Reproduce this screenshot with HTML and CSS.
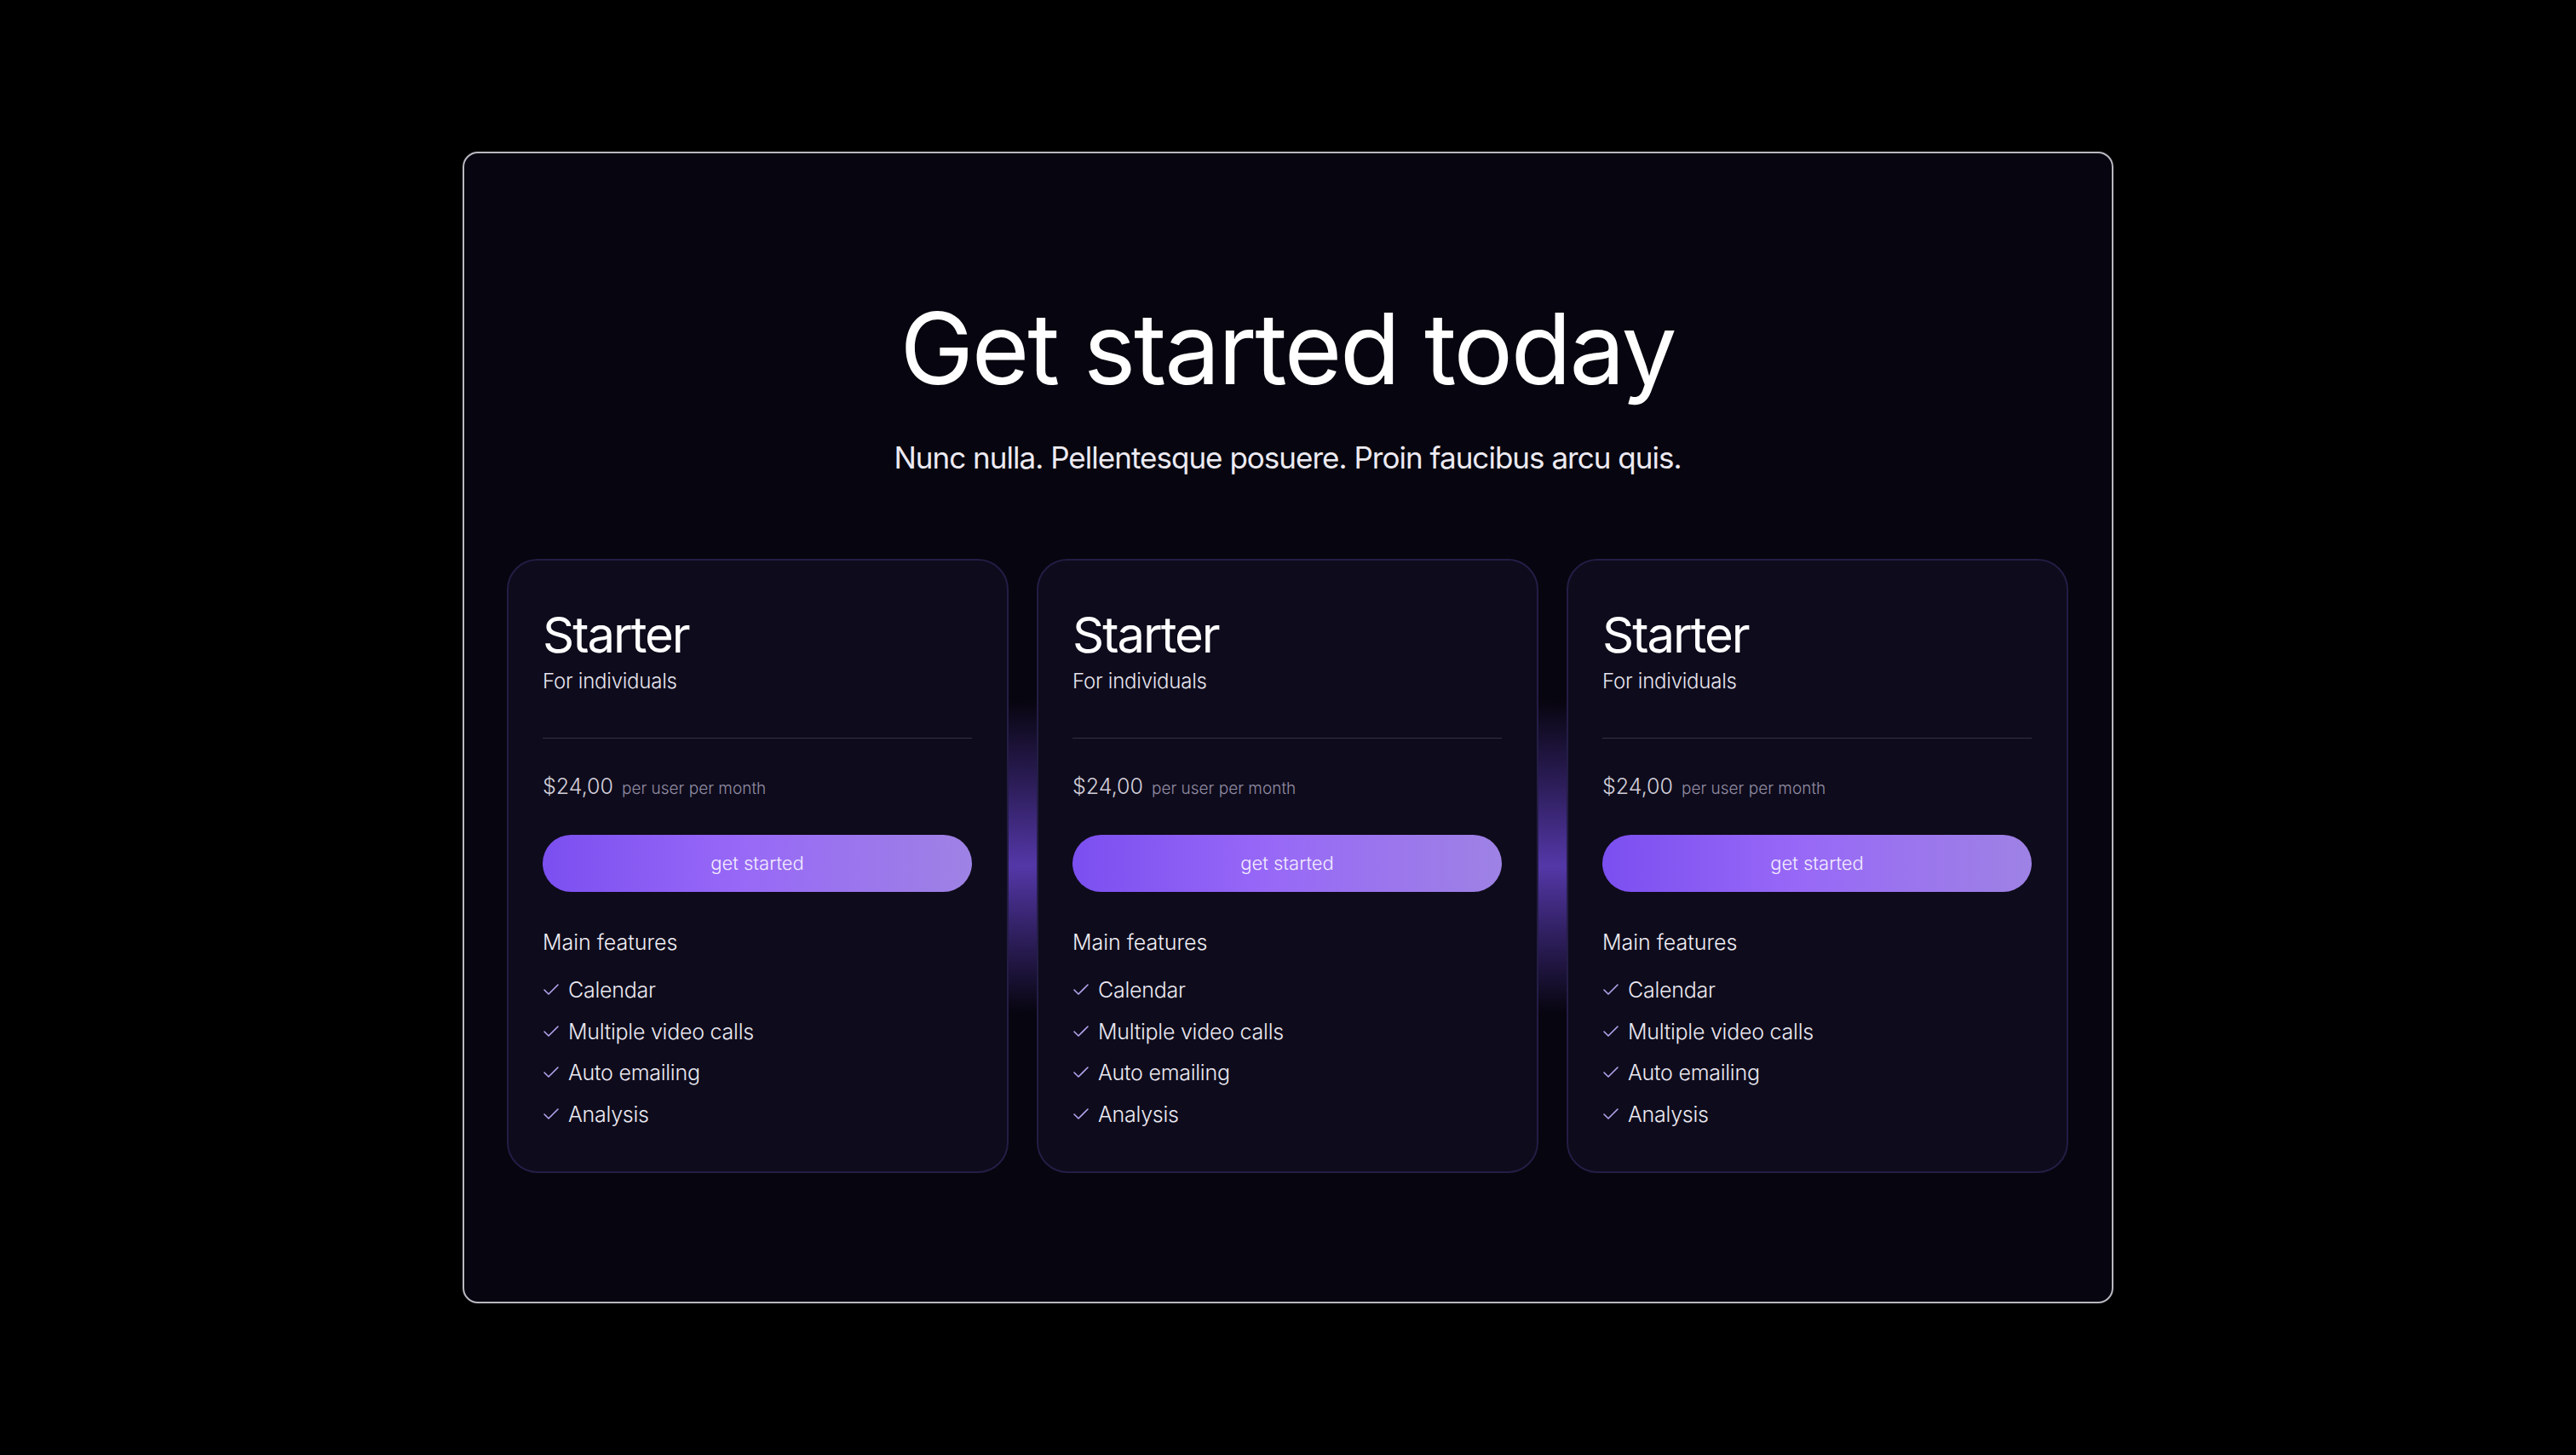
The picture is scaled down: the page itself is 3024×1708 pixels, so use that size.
FILE: index.html
```html
<!DOCTYPE html>
<html lang="en">
<head>
  <meta charset="UTF-8" />
  <meta name="viewport" content="width=device-width, initial-scale=1.0"/>
  <title>Pricing</title>
  <link rel="stylesheet" href="styles.css">
</head>
<body>

  <main class="pricing">
    <header class="intro">
      <h1>Get started today</h1>
      <p>Nunc nulla. Pellentesque posuere. Proin faucibus arcu quis.</p>
    </header>

    <div class="plans" id="plans"></div>
  </main>

  <script>
    const plans = [
      { name: "Starter", audience: "For individuals", price: "$24,00", period: "per user per month" },
      { name: "Starter", audience: "For individuals", price: "$24,00", period: "per user per month" },
      { name: "Starter", audience: "For individuals", price: "$24,00", period: "per user per month" }
    ];

    const features = ["Calendar", "Multiple video calls", "Auto emailing", "Analysis"];

    const checkIcon = `<svg class="check" width="24" height="24" viewBox="0 0 24 24" fill="none"
      stroke="currentColor" stroke-width="1.6" stroke-linecap="round" stroke-linejoin="round">
      <path d="M20 6 9 17l-5-5"/></svg>`;

    const list = document.getElementById("plans");

    plans.forEach(plan => {
      const card = document.createElement("article");
      card.className = "plan";
      card.innerHTML = `
        <h2>${plan.name}</h2>
        <div class="audience">${plan.audience}</div>
        <hr class="divider" />
        <div class="price"><span class="amount">${plan.price}</span><span class="period">${plan.period}</span></div>
        <button class="cta">get started</button>
        <h3>Main features</h3>
        <ul class="features">
          ${features.map(f => `<li>${checkIcon}<span>${f}</span></li>`).join("")}
        </ul>
      `;
      list.appendChild(card);
    });
  </script>

</body>
</html>
```

FILE: styles.css
```css
html, body {
  margin: 0;
  padding: 0;
}

body {
  font-family: Inter, "Noto Sans", sans-serif;
  background-color: #000;
  color: #fff;
  min-height: 100vh;
  display: flex;
  align-items: center;
  justify-content: center;
}

.pricing {
  width: 1938px;
  box-sizing: border-box;
  border: 2px solid #b9b8c0;
  border-radius: 18px;
  background-color: #07050f;
  padding: 171px 51px 151px 50px;
}

.intro {
  text-align: center;
}

.intro h1 {
  margin: 0;
  font-size: 116px;
  line-height: 116px;
  font-weight: 400;
  letter-spacing: -0.02em;
  color: #fff;
}

.intro p {
  margin: 49px 0 0 0;
  font-size: 35px;
  line-height: 42px;
  font-weight: 400;
  letter-spacing: -0.028em;
  color: #eceaf2;
}

.plans {
  margin-top: 98px;
  display: grid;
  grid-template-columns: repeat(3, 1fr);
  gap: 33px;
  background: linear-gradient(to bottom,
    transparent 23%,
    rgba(70, 46, 140, 0.6) 37%,
    rgba(88, 58, 176, 0.95) 50%,
    rgba(70, 46, 140, 0.6) 62%,
    transparent 74%);
}

.plan {
  background-color: #0e0b1c;
  border: 2px solid #241d45;
  border-radius: 36px;
  padding: 52px 41px 52px 40px;
  display: flex;
  flex-direction: column;
}

.plan h2 {
  margin: 0;
  font-size: 58px;
  line-height: 70px;
  font-weight: 400;
  letter-spacing: -0.035em;
}

.audience {
  margin-top: 5px;
  font-size: 24px;
  line-height: 29px;
  font-weight: 300;
  letter-spacing: -0.01em;
  color: #e6e4ee;
}

.divider {
  margin: 52px 0 0 0;
  border: none;
  height: 1px;
  background-color: #34304a;
}

.price {
  margin-top: 41px;
  display: flex;
  align-items: baseline;
  gap: 10px;
  line-height: 30px;
}

.amount {
  font-size: 25px;
  font-weight: 300;
  color: #d2cfda;
}

.period {
  font-size: 19px;
  font-weight: 300;
  color: #928da3;
}

.cta {
  margin-top: 39px;
  height: 67px;
  border: none;
  border-radius: 999px;
  background: linear-gradient(to right, #7b4ff0 0%, #9768f7 45%, #9e82e4 100%);
  color: #f3ecff;
  font-family: inherit;
  font-size: 22px;
  font-weight: 300;
  cursor: pointer;
}

.plan h3 {
  margin: 44px 0 0 0;
  font-size: 25px;
  line-height: 30px;
  font-weight: 300;
  color: #eeedf3;
}

.features {
  list-style: none;
  margin: 26px 0 0 0;
  padding: 0;
  display: flex;
  flex-direction: column;
  gap: 18.7px;
}

.features li {
  display: flex;
  align-items: center;
  gap: 8px;
  font-size: 25px;
  line-height: 30px;
  font-weight: 300;
  letter-spacing: -0.01em;
  color: #eae8f0;
}

.check {
  flex: none;
  margin-left: -2px;
  color: #b3a4ec;
}
```
